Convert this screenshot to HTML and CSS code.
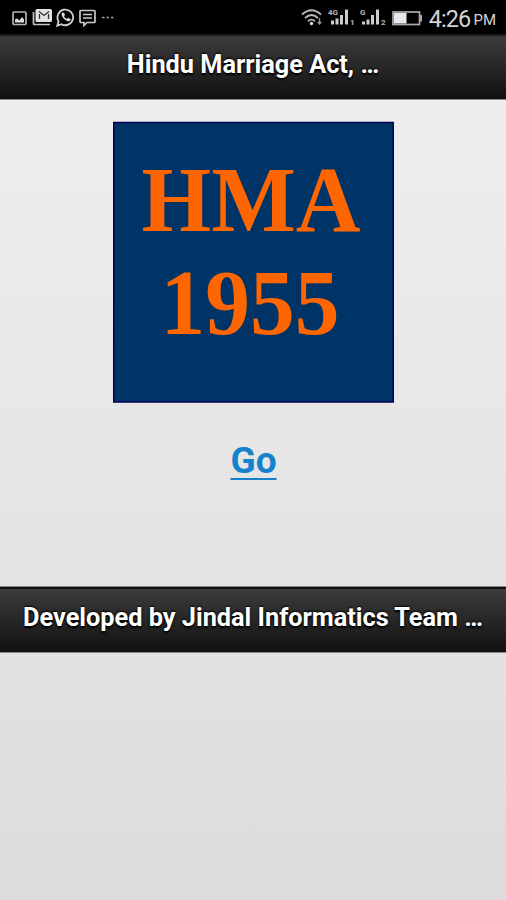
FILE: index.html
```
<!DOCTYPE html>
<html lang="en">
<head>
    <meta charset="UTF-8">
    <meta name="viewport" content="width=device-width, initial-scale=1.0">
    <title>Hindu Marriage Act, 1955</title>
    <link rel="stylesheet" href="styles.css">
</head>
<body>
    <!-- Phone status bar -->
    <div class="status-bar">
        <div class="status-left">
            <svg class="icon-picture" width="15" height="15" viewBox="0 0 15 15">
                <rect x="1" y="1" width="13" height="12.5" rx="1" fill="none" stroke="#b4b4b4" stroke-width="1.7" />
                <path d="M3 11.5V8.500l2-1 2.500 2L10 6l2 2.500v3z" fill="#ddd" />
            </svg>
            <svg class="icon-mail" width="21" height="18" viewBox="0 0 21 18">
                <path d="M1.500 4v11.500a1 1 0 0 0 1 1H18" fill="none" stroke="#c4c4c4" stroke-width="1.700" />
                <rect x="3.500" y="1" width="16.500" height="13" rx="1.500" fill="#e2e2e2" />
                <path d="M7 3.500l5 4 5-4M7.500 11V6M16.500 11V6" fill="none" stroke="#333" stroke-width="1.300" />
            </svg>
            <svg class="icon-whatsapp" width="19" height="19" viewBox="0 0 19 19">
                <path d="M1.300 17.700l1.200-4.500a7.800 7.800 0 1 1 3 3z" fill="none" stroke="#d2d2d2" stroke-width="1.800" />
                <path d="M6 4.800c-2 2.500 3.500 9 7 8.500 1.500-.3 1.700-1.500 1.500-2.300l-2.300-1.200-1.200 1.300c-1.500-.6-2.500-1.800-3-2.900l1-1.200-1-2.300z" fill="#ddd" />
            </svg>
            <svg class="icon-message" width="17" height="18" viewBox="0 0 17 18">
                <path d="M2 1.500h13q1 0 1 1v10q0 1-1 1H8l-3 3v-3H2q-1 0-1-1v-10q0-1 1-1z" fill="none" stroke="#c8c8c8" stroke-width="1.700" />
                <path d="M4 5.500h9M4 9h9" stroke="#ccc" stroke-width="1.500" />
            </svg>
            <svg class="icon-more" width="12" height="3" viewBox="0 0 12 3">
                <path d="M0 1.500h2.500M4.500 1.500H7M9 1.500h2.500" stroke="#a0a0a0" stroke-width="1.300" />
            </svg>
        </div>
        <div class="status-right">
            <svg class="icon-wifi" width="22" height="17" viewBox="0 0 22 17">
                <path d="M1 5.500q9.500-8.500 19 0M4 9q6.500-6 13 0M7 12.300q3.500-3.300 7 0" fill="none" stroke="#b8b8b8" stroke-width="1.800" />
                <circle cx="10.500" cy="14.500" r="1.700" fill="#ddd" />
                <path d="M18.500 9v6M16.800 13l1.700 2 1.700-2" fill="none" stroke="#999" stroke-width="1.400" />
            </svg>
            <svg class="icon-signal" width="27" height="18" viewBox="0 0 27 18">
                <text class="signal-label" x="0" y="6.500">4G</text>
                <path d="M4.500 16.500v-4M9 16.500v-6M13.500 16.500V7M18.500 16.500V1.500" stroke="#ccc" stroke-width="3" />
                <text class="signal-label" x="22" y="16.500">1</text>
            </svg>
            <svg class="icon-signal" width="27" height="18" viewBox="0 0 27 18">
                <text class="signal-label" x="0" y="6.500">G</text>
                <path d="M3.500 16.500v-3M8 16.500v-5M12.500 16.500V7M17.500 16.500V1.500" stroke="#ccc" stroke-width="3" />
                <text class="signal-label" x="21" y="16.500">2</text>
            </svg>
            <svg class="icon-battery" width="31" height="15" viewBox="0 0 31 15">
                <rect x="1" y="1" width="26.500" height="12.500" fill="none" stroke="#aaa" stroke-width="1.700" />
                <rect x="2" y="2" width="12.500" height="10.500" fill="#e8e8e8" />
                <path d="M29 4v6.500" stroke="#aaa" stroke-width="2" />
            </svg>
            <span class="clock">4:26</span>
            <span class="clock-period">PM</span>
        </div>
    </div>

    <header class="bar header">
        <h1 class="bar-title">Hindu Marriage Act, …</h1>
    </header>

    <main class="content">
        <svg class="logo" width="282" height="282" viewBox="0 0 282 282" role="img" aria-label="HMA 1955">
            <rect x="1.750" y="1.500" width="279.500" height="279.500" fill="#003366" stroke="#000058" stroke-width="1.500" />
            <text class="logo-text" x="29.500" y="110" textLength="219" lengthAdjust="spacingAndGlyphs">HMA</text>
            <text class="logo-text" x="48.500" y="213" textLength="179" lengthAdjust="spacingAndGlyphs">1955</text>
        </svg>
        <a href="#" class="go-link">Go</a>
    </main>

    <footer class="bar footer">
        <h2 class="bar-title">Developed by Jindal Informatics Team …</h2>
    </footer>
</body>
</html>
```
FILE: styles.css
```
* {
    margin: 0;
    padding: 0;
    box-sizing: border-box;
}

body {
    font-family: Roboto, "Liberation Sans", sans-serif;
    height: 900px;
    overflow: hidden;
    background: linear-gradient(#eee 100px, #dcdcdc 900px);
}

/* Status bar */
.status-bar {
    display: flex;
    justify-content: space-between;
    height: 34px;
    padding: 0 10px 0 12px;
    background: #000;
    color: #d4d4d4;
}

.status-left,
.status-right {
    display: flex;
    align-items: center;
}

.icon-picture {
    margin-top: 2px;
}

.icon-mail {
    margin-left: 5px;
}

.icon-whatsapp {
    margin-left: 3px;
}

.icon-message {
    margin: 2px 0 0 4px;
}

.icon-more {
    margin-left: 6px;
}

.icon-signal {
    margin-left: 5px;
}

.icon-wifi {
    margin-top: 1px;
}

.signal-label {
    font-size: 8px;
    font-weight: 700;
    fill: #b8b8b8;
}

.icon-battery {
    margin: 2px 0 0 5px;
}

.clock {
    margin: 3px 0 0 6px;
    font-size: 23.5px;
    line-height: 34px;
    letter-spacing: -0.9px;
}

.clock-period {
    margin: 6px 0 0 3px;
    font-size: 15px;
}

/* Title bars */
.bar {
    height: 66px;
    padding-top: 15px;
    border-top: 2px solid #1c1c1c;
    border-bottom: 1px solid #888;
    background: linear-gradient(#3c3c3c, #111);
    color: #fff;
    text-align: center;
}

.bar-title {
    font-size: 25.3px;
    font-weight: 700;
    line-height: 28px;
    white-space: nowrap;
    text-shadow: 0 -1px 2px #000, 0 2px 2px #000;
}

.footer {
    border-top-color: #111;
    box-shadow: 0 -1px 0 #888;
}

/* Content */
.content {
    display: flex;
    flex-direction: column;
    align-items: center;
    height: 487px;
    padding-top: 21px;
}

.logo-text {
    font-family: "Liberation Serif", serif;
    font-size: 93px;
    font-weight: 700;
    fill: #ff6600;
}

.go-link {
    margin: 36px 0 0 1px;
    font-size: 37px;
    font-weight: 700;
    line-height: 44px;
    color: #1482cc;
    text-decoration-thickness: 2px;
    text-underline-offset: 5px;
}
```
